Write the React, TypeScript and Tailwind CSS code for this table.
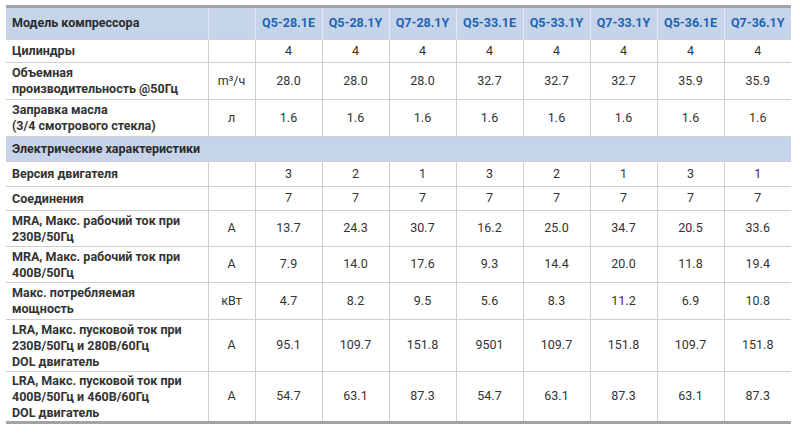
const MODELS = ["Q5-28.1E", "Q5-28.1Y", "Q7-28.1Y", "Q5-33.1E", "Q5-33.1Y", "Q7-33.1Y", "Q5-36.1E", "Q7-36.1Y"];

type Row = { label: string[]; unit: string; values: string[]; h: string };

const TOP_ROWS: Row[] = [
  { label: ["Цилиндры"], unit: "", values: ["4", "4", "4", "4", "4", "4", "4", "4"], h: "h-[23px]" },
  {
    label: ["Объемная", "производительность @50Гц"],
    unit: "m³/ч",
    values: ["28.0", "28.0", "28.0", "32.7", "32.7", "32.7", "35.9", "35.9"],
    h: "h-[37px]",
  },
  {
    label: ["Заправка масла", "(3/4 смотрового стекла)"],
    unit: "л",
    values: ["1.6", "1.6", "1.6", "1.6", "1.6", "1.6", "1.6", "1.6"],
    h: "h-[37px]",
  },
];

const ELECTRIC_ROWS: Row[] = [
  { label: ["Версия двигателя"], unit: "", values: ["3", "2", "1", "3", "2", "1", "3", "1"], h: "h-[25px]" },
  { label: ["Соединения"], unit: "", values: ["7", "7", "7", "7", "7", "7", "7", "7"], h: "h-[24px]" },
  {
    label: ["MRA, Макс. рабочий ток при", "230В/50Гц"],
    unit: "A",
    values: ["13.7", "24.3", "30.7", "16.2", "25.0", "34.7", "20.5", "33.6"],
    h: "h-[36px]",
  },
  {
    label: ["MRA, Макс. рабочий ток при", "400В/50Гц"],
    unit: "A",
    values: ["7.9", "14.0", "17.6", "9.3", "14.4", "20.0", "11.8", "19.4"],
    h: "h-[36px]",
  },
  {
    label: ["Макс. потребляемая", "мощность"],
    unit: "кВт",
    values: ["4.7", "8.2", "9.5", "5.6", "8.3", "11.2", "6.9", "10.8"],
    h: "h-[37px]",
  },
  {
    label: ["LRA, Макс. пусковой ток при", "230В/50Гц и 280В/60Гц", "DOL двигатель"],
    unit: "A",
    values: ["95.1", "109.7", "151.8", "9501", "109.7", "151.8", "109.7", "151.8"],
    h: "h-[52px]",
  },
  {
    label: ["LRA, Макс. пусковой ток при", "400В/50Гц и 460В/60Гц", "DOL двигатель"],
    unit: "A",
    values: ["54.7", "63.1", "87.3", "54.7", "63.1", "87.3", "63.1", "87.3"],
    h: "h-[51px]",
  },
];

function DataRow({ row, last }: { row: Row; last?: boolean }) {
  return (
    <tr className={`${row.h} ${last ? "" : "border-b border-[#cfcfcf]"}`}>
      <td className="pl-[6px] pr-1 font-bold text-[#333] leading-[16px] align-middle">
        {row.label.map((l, i) => (
          <div key={i}>{l}</div>
        ))}
      </td>
      <td className="border-l border-[#cfcfcf] text-center text-[#333]">{row.unit}</td>
      {row.values.map((v, i) => (
        <td key={i} className="border-l border-[#cfcfcf] text-center text-[#333]">
          {v}
        </td>
      ))}
    </tr>
  );
}

export default function App() {
  return (
    <div className="w-[800px] h-[437px] bg-white pt-[5px] pl-[6px] overflow-hidden">
      <table
        className="w-[785px] table-fixed border-collapse text-[12.5px] border-t-[3px] border-b-[3px] border-t-[#a3a3a3] border-b-[#a3a3a3]"
        style={{ fontFamily: "Roboto, 'Liberation Sans', sans-serif" }}
      >
        <colgroup>
          <col className="w-[202px]" />
          <col className="w-[47px]" />
          {MODELS.map((m) => (
            <col key={m} className="w-[67px]" />
          ))}
        </colgroup>
        <tbody>
          <tr className="h-[33px] bg-[#c6d4ea] border-b border-[#cfcfcf]">
            <td className="pl-[6px] font-bold text-[#2b2b2b]">Модель компрессора</td>
            <td className="border-l border-[#e3e9f3]"></td>
            {MODELS.map((m) => (
              <td key={m} className="border-l border-[#e3e9f3] text-center font-bold text-[#1c64b4]">
                {m}
              </td>
            ))}
          </tr>
          {TOP_ROWS.map((r) => (
            <DataRow key={r.label.join()} row={r} />
          ))}
          <tr className="h-[25px] bg-[#c6d4ea] border-b border-[#cfcfcf]">
            <td colSpan={10} className="pl-[6px] font-bold text-[#2b2b2b]">
              Электрические характеристики
            </td>
          </tr>
          {ELECTRIC_ROWS.map((r, i) => (
            <DataRow key={r.label.join()} row={r} last={i === ELECTRIC_ROWS.length - 1} />
          ))}
        </tbody>
      </table>
    </div>
  );
}
